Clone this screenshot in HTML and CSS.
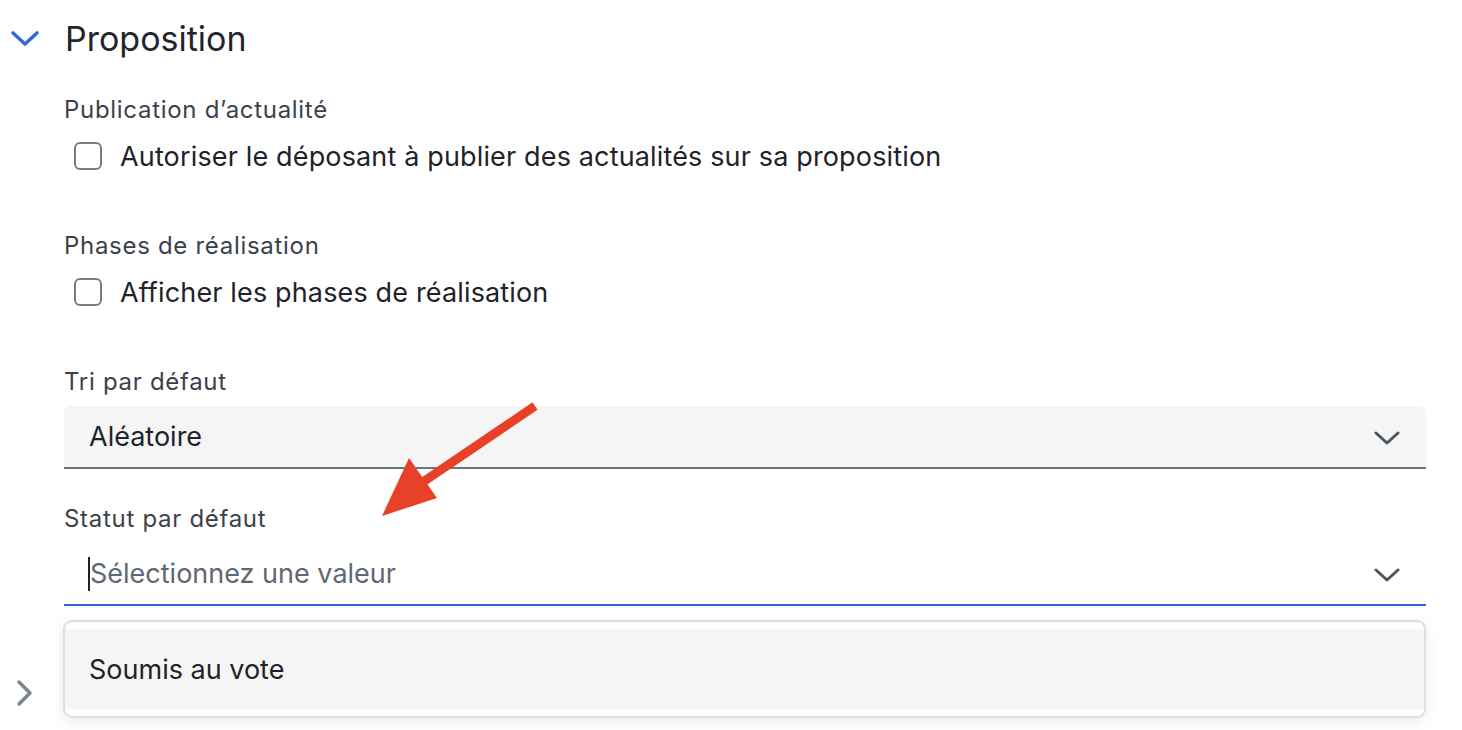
FILE: index.html
```html
<!DOCTYPE html>
<html lang="fr">
<head>
<meta charset="utf-8">
<title>Proposition</title>
<link rel="stylesheet" href="styles.css">
</head>
<body>
<div class="page">
  <section class="section">
    <header class="section-head">
      <svg class="chev-blue" width="30" height="18" viewBox="0 0 30 18"><path d="M3 3 L15 14 L27 3" fill="none" stroke="#2f6bd8" stroke-width="3.6" stroke-linecap="round" stroke-linejoin="round"/></svg>
      <h2 class="section-title">Proposition</h2>
    </header>
    <div class="fields">
      <div class="field">
        <div class="label">Publication d’actualité</div>
        <label class="check"><span class="box"></span><span class="check-text">Autoriser le déposant à publier des actualités sur sa proposition</span></label>
      </div>
      <div class="field">
        <div class="label">Phases de réalisation</div>
        <label class="check"><span class="box"></span><span class="check-text">Afficher les phases de réalisation</span></label>
      </div>
      <div class="field field-select">
        <div class="label">Tri par défaut</div>
        <div class="select filled">
          <span class="value">Aléatoire</span>
          <svg class="chev" width="26" height="16" viewBox="0 0 26 16"><path d="M2 3 L13 13 L24 3" fill="none" stroke="#4b5563" stroke-width="3" stroke-linecap="round" stroke-linejoin="round"/></svg>
        </div>
      </div>
      <div class="field field-select">
        <div class="label">Statut par défaut</div>
        <div class="select focused">
          <span class="caret"></span>
          <span class="placeholder">Sélectionnez une valeur</span>
          <svg class="chev" width="26" height="16" viewBox="0 0 26 16"><path d="M2 3 L13 13 L24 3" fill="none" stroke="#4b5563" stroke-width="3" stroke-linecap="round" stroke-linejoin="round"/></svg>
        </div>
        <div class="menu">
          <div class="option">Soumis au vote</div>
        </div>
      </div>
    </div>
  </section>
  <div class="next-section">
    <svg width="20" height="28" viewBox="0 0 20 28"><path d="M4 3 L15 14 L4 25" fill="none" stroke="#7c8692" stroke-width="3.4" stroke-linecap="round" stroke-linejoin="round"/></svg>
  </div>
  <svg class="annot-arrow" width="180" height="130" viewBox="0 0 180 130">
    <line x1="155" y1="10" x2="40" y2="88" stroke="#e8412a" stroke-width="9"/>
    <polygon points="2,120 29,62 57,102" fill="#e8412a"/>
  </svg>
</div>
</body>
</html>
```

FILE: styles.css
```css
* { box-sizing: border-box; }
html, body { margin: 0; padding: 0; background: #ffffff; }
body {
  font-family: Inter, "Noto Sans", "Liberation Sans", sans-serif;
  color: #1f2329;
  width: 1462px;
  height: 730px;
  overflow: hidden;
}
.page { position: relative; height: 730px; }
.section { padding: 16px 36px 0 10px; }
.section-head {
  display: flex;
  align-items: center;
  height: 44px;
}
.chev-blue { margin-right: 25px; margin-top: 2px; }
.section-title {
  margin: 0;
  font-size: 34px;
  font-weight: 400;
  color: #22262c;
  letter-spacing: 0;
}
.fields { padding-left: 54px; padding-top: 36px; }
.field { margin-bottom: 58px; }
.field-select { margin-bottom: 36px; }
.label {
  font-size: 24px;
  letter-spacing: 0.7px;
  color: #3b424a;
  line-height: 28px;
}
.check {
  display: flex;
  align-items: center;
  margin-top: 14px;
  margin-left: 10px;
  height: 36px;
}
.box {
  width: 28px;
  height: 28px;
  border: 2px solid #737e8a;
  border-radius: 6px;
  margin-right: 18px;
  flex: none;
}
.check-text {
  font-size: 27px;
  letter-spacing: 0.15px;
  color: #1f2329;
}
.select {
  margin-top: 10px;
  height: 63px;
  display: flex;
  align-items: center;
  padding: 0 26px 0 25px;
  font-size: 27px;
  position: relative;
}
.select.filled {
  background: #f5f5f5;
  border-radius: 7px 7px 0 0;
  border-bottom: 2px solid #6b7580;
}
.select.focused {
  border-bottom: 2px solid #2d66d3;
}
.value { flex: 1; color: #1f2329; }
.placeholder { flex: 1; color: #5d6874; }
.caret {
  width: 2px;
  height: 34px;
  background: #1f2329;
  margin-left: -1px;
}
.chev { flex: none; margin-top: 2px; }
.menu {
  margin-top: 14px;
  margin-left: -1px;
  border: 2px solid #dedede;
  border-radius: 9px;
  padding: 7px 0;
  box-shadow: 0 4px 14px rgba(0,0,0,0.08);
  background: #fff;
}
.option {
  background: #f5f5f5;
  height: 80px;
  display: flex;
  align-items: center;
  padding-left: 24px;
  font-size: 27px;
  color: #1f2329;
}
.next-section {
  position: absolute;
  left: 15px;
  top: 679px;
}
.annot-arrow {
  position: absolute;
  left: 380px;
  top: 396px;
}
```
